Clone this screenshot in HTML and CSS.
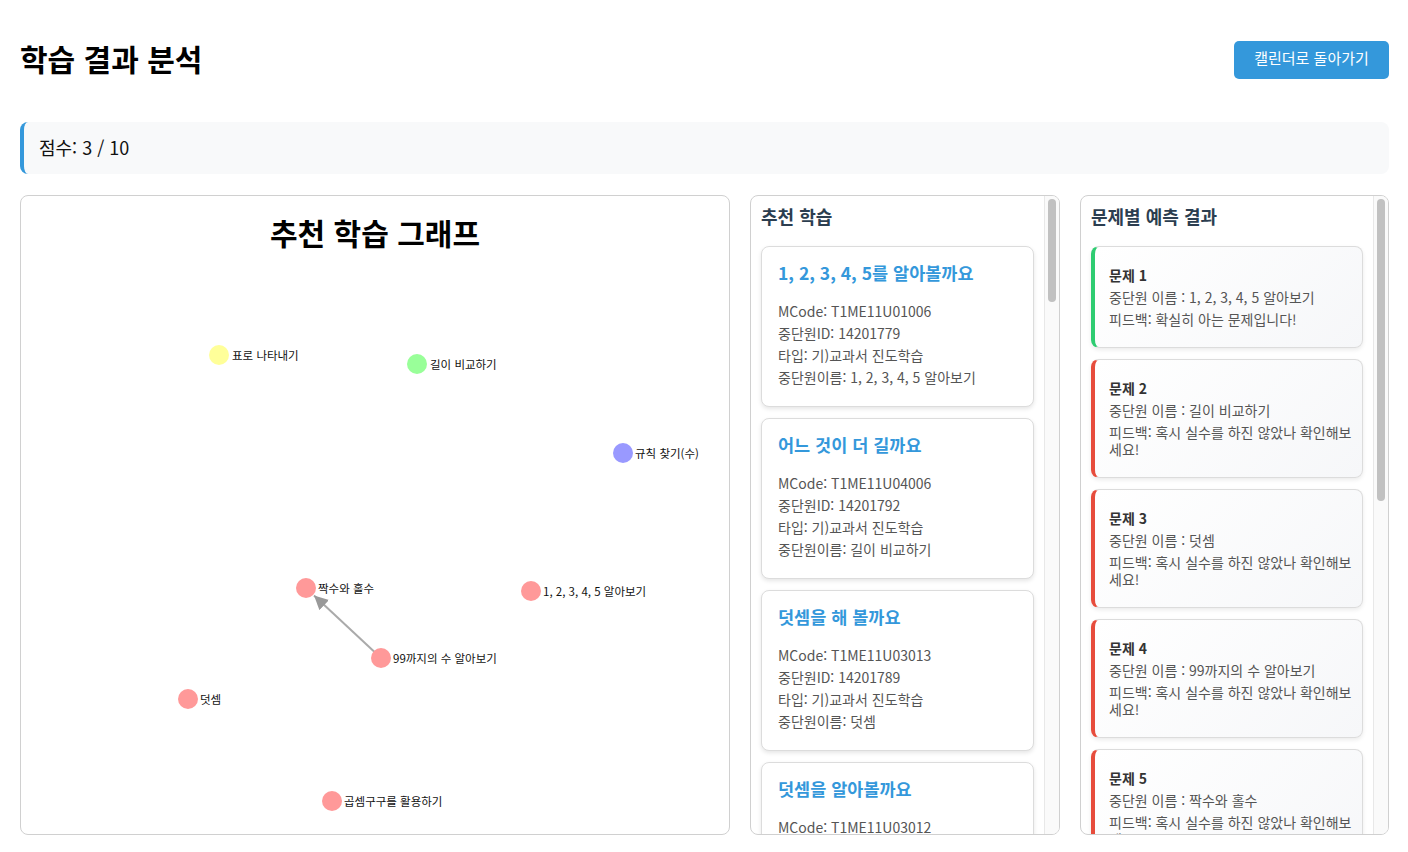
FILE: index.html
```html
<!DOCTYPE html>
<html lang="ko">
<head>
<meta charset="utf-8">
<title>학습 결과 분석</title>
<link rel="stylesheet" href="styles.css">
</head>
<body>
<div class="page">
  <header class="header">
    <h1 class="title">학습 결과 분석</h1>
    <button class="back-btn">캘린더로 돌아가기</button>
  </header>

  <div class="score">점수: 3 / 10</div>

  <div class="panels">
    <section class="panel graph-panel">
      <h2 class="graph-title">추천 학습 그래프</h2>
      <svg class="graph" width="708" height="563" viewBox="0 0 708 563">
        <defs>
          <marker id="arrow" viewBox="0 0 10 10" refX="10" refY="5" markerWidth="7" markerHeight="7" orient="auto">
            <path d="M0,0 L10,5 L0,10 z" fill="#999"/>
          </marker>
        </defs>
        <line x1="360" y1="389" x2="293" y2="326.5" stroke="#aaa" stroke-width="2" marker-end="url(#arrow)"/>
        <g class="node"><circle cx="198" cy="86" r="10" fill="#ffff99"/><text x="211" y="86">표로 나타내기</text></g>
        <g class="node"><circle cx="396" cy="95" r="10" fill="#99ff99"/><text x="409" y="95">길이 비교하기</text></g>
        <g class="node"><circle cx="602" cy="184" r="10" fill="#9999ff"/><text x="614" y="184">규칙 찾기(수)</text></g>
        <g class="node"><circle cx="285" cy="319" r="10" fill="#ff9999"/><text x="297" y="319">짝수와 홀수</text></g>
        <g class="node"><circle cx="510" cy="322" r="10" fill="#ff9999"/><text x="522" y="322">1, 2, 3, 4, 5 알아보기</text></g>
        <g class="node"><circle cx="360" cy="389" r="10" fill="#ff9999"/><text x="372" y="389">99까지의 수 알아보기</text></g>
        <g class="node"><circle cx="167" cy="430" r="10" fill="#ff9999"/><text x="179" y="430">덧셈</text></g>
        <g class="node"><circle cx="311" cy="532" r="10" fill="#ff9999"/><text x="323" y="532">곱셈구구를 활용하기</text></g>
      </svg>
    </section>

    <section class="panel list-panel">
      <div class="list-content">
        <h3 class="panel-title">추천 학습</h3>
        <div class="rec-card">
          <h4 class="rec-title">1, 2, 3, 4, 5를 알아볼까요</h4>
          <p>MCode: T1ME11U01006</p><p>중단원ID: 14201779</p><p>타입: 기)교과서 진도학습</p><p>중단원이름: 1, 2, 3, 4, 5 알아보기</p>
        </div>
        <div class="rec-card">
          <h4 class="rec-title">어느 것이 더 길까요</h4>
          <p>MCode: T1ME11U04006</p><p>중단원ID: 14201792</p><p>타입: 기)교과서 진도학습</p><p>중단원이름: 길이 비교하기</p>
        </div>
        <div class="rec-card">
          <h4 class="rec-title">덧셈을 해 볼까요</h4>
          <p>MCode: T1ME11U03013</p><p>중단원ID: 14201789</p><p>타입: 기)교과서 진도학습</p><p>중단원이름: 덧셈</p>
        </div>
        <div class="rec-card">
          <h4 class="rec-title">덧셈을 알아볼까요</h4>
          <p>MCode: T1ME11U03012</p><p>중단원ID: 14201789</p><p>타입: 기)교과서 진도학습</p><p>중단원이름: 덧셈</p>
        </div>
      </div>
      <div class="scrollbar"><div class="thumb thumb-rec"></div></div>
    </section>

    <section class="panel list-panel">
      <div class="list-content">
        <h3 class="panel-title">문제별 예측 결과</h3>
        <div class="prob-card correct">
          <p class="prob-title">문제 1</p><p>중단원 이름 : 1, 2, 3, 4, 5 알아보기</p><p>피드백: 확실히 아는 문제입니다!</p>
        </div>
        <div class="prob-card wrong">
          <p class="prob-title">문제 2</p><p>중단원 이름 : 길이 비교하기</p><p>피드백: 혹시 실수를 하진 않았나 확인해보세요!</p>
        </div>
        <div class="prob-card wrong">
          <p class="prob-title">문제 3</p><p>중단원 이름 : 덧셈</p><p>피드백: 혹시 실수를 하진 않았나 확인해보세요!</p>
        </div>
        <div class="prob-card wrong">
          <p class="prob-title">문제 4</p><p>중단원 이름 : 99까지의 수 알아보기</p><p>피드백: 혹시 실수를 하진 않았나 확인해보세요!</p>
        </div>
        <div class="prob-card wrong">
          <p class="prob-title">문제 5</p><p>중단원 이름 : 짝수와 홀수</p><p>피드백: 혹시 실수를 하진 않았나 확인해보세요!</p>
        </div>
      </div>
      <div class="scrollbar"><div class="thumb thumb-prob"></div></div>
    </section>
  </div>
</div>
</body>
</html>
```

FILE: styles.css
```css
* { box-sizing: border-box; }

html, body {
  margin: 0;
  padding: 0;
  background: #fff;
  overflow: hidden;
}

body {
  font-family: "Noto Sans CJK KR", "Noto Sans", sans-serif;
  color: #000;
}

.page {
  padding: 20px 19px 0 20px;
}

.header {
  display: flex;
  justify-content: space-between;
  align-items: flex-start;
  height: 80px;
  margin-bottom: 22px;
}

.title {
  margin: 20px 0 0;
  font-size: 30px;
  font-weight: 700;
  line-height: 36px;
  color: #000;
}

.back-btn {
  background: #3498db;
  color: #fff;
  border: none;
  border-radius: 5px;
  font-family: inherit;
  font-size: 15px;
  line-height: 18px;
  padding: 8px 10px 12px;
  height: 38px;
  width: 155px;
  margin-top: 21px;
}

.score {
  background: #f8f9fa;
  border-left: 4px solid #3498db;
  border-radius: 8px;
  height: 52px;
  padding: 0 15px 3px;
  display: flex;
  align-items: center;
  font-size: 18px;
  color: #111;
  margin-bottom: 21px;
}

.panels {
  display: grid;
  grid-template-columns: 710px 310px 1fr;
  gap: 20px;
  height: 640px;
}

.panel {
  border: 1px solid #d0d0d0;
  border-radius: 8px;
  background: #fff;
  height: 640px;
  overflow: hidden;
}

.graph-title {
  margin: 18px 0 19px;
  text-align: center;
  font-size: 30px;
  line-height: 36px;
  font-weight: 700;
  color: #000;
}

.graph {
  display: block;
}

.node text {
  font-family: "Noto Sans CJK KR", "Noto Sans", sans-serif;
  font-size: 11.5px;
  fill: #111;
  dominant-baseline: central;
}

.list-panel {
  display: flex;
}

.list-content {
  flex: 1;
  min-width: 0;
  padding: 10px;
  overflow: hidden;
}

.scrollbar {
  width: 15px;
  flex: none;
  background: #fafafa;
  border-left: 1px solid #e8e8e8;
  padding: 3px 3px 0 3px;
}

.thumb {
  background: #c1c1c1;
  border-radius: 5px;
}

.thumb-rec { height: 103px; }
.thumb-prob { height: 302px; }

.panel-title {
  margin: 0 0 19px;
  font-size: 18px;
  line-height: 21px;
  font-weight: 700;
  color: #2c3e50;
}

.rec-card {
  border: 1px solid #dcdcdc;
  border-radius: 8px;
  padding: 15px 16px 15px;
  margin-bottom: 11px;
  background: #fff;
  box-shadow: 0 2px 4px rgba(0, 0, 0, 0.1);
}

.rec-title {
  margin: 0 0 20px;
  font-size: 17.5px;
  line-height: 21px;
  font-weight: 700;
  color: #3498db;
}

.rec-card p {
  margin: 5px 0;
  font-size: 14px;
  line-height: 17px;
  color: #555;
}

.prob-card {
  border: 1px solid #dcdcdc;
  border-left: 4px solid #e74c3c;
  border-radius: 8px;
  padding: 15px 8px 14px 14px;
  margin-bottom: 11px;
  background: linear-gradient(135deg, #ffffff 0%, #f6f7f9 100%);
  box-shadow: 0 2px 4px rgba(0, 0, 0, 0.08);
}

.prob-card.correct {
  border-left-color: #2ecc71;
}

.prob-card p {
  margin: 5px 0;
  font-size: 14px;
  line-height: 17px;
  color: #555;
}

.prob-card .prob-title {
  font-weight: 700;
  color: #333;
}
```
